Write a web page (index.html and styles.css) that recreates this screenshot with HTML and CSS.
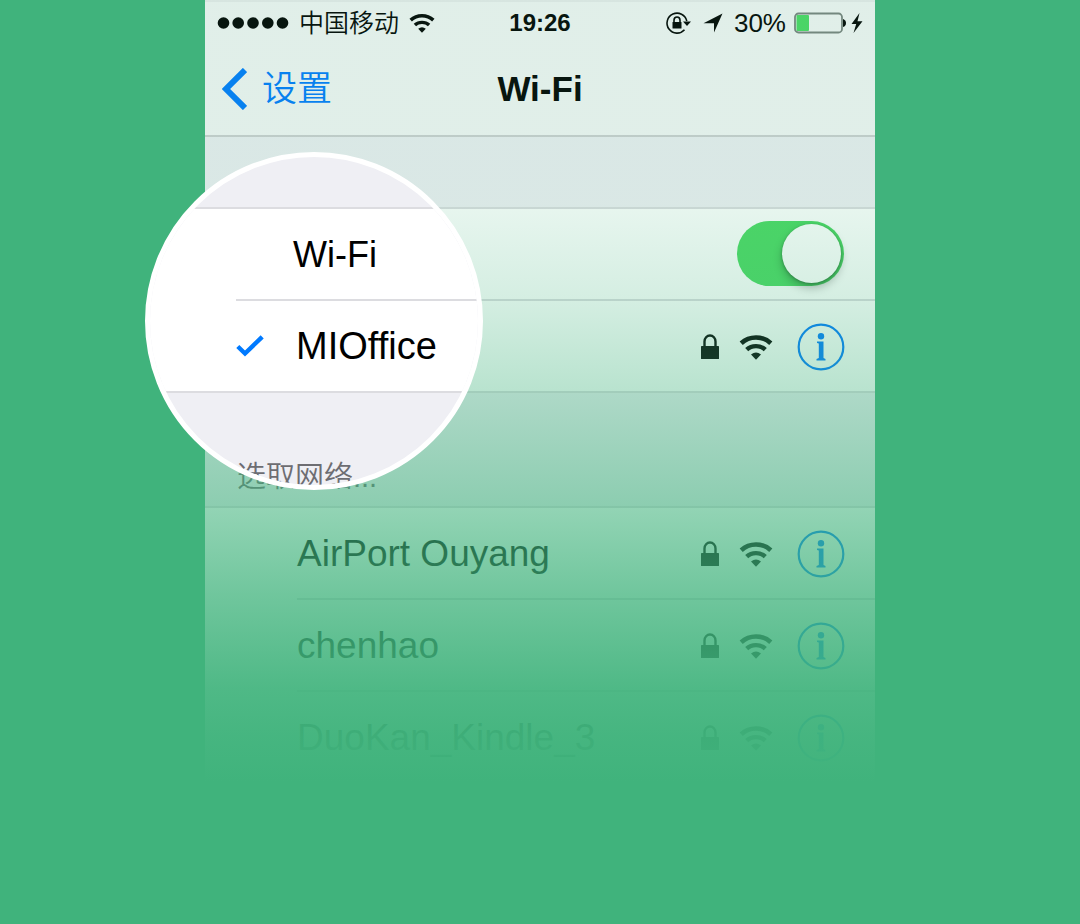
FILE: index.html
```html
<!DOCTYPE html>
<html lang="zh-CN">
<head>
<meta charset="utf-8">
<meta name="viewport" content="width=device-width, initial-scale=1">
<title>Wi-Fi</title>
<link rel="stylesheet" href="styles.css">
</head>
<body>
<svg class="sprite" aria-hidden="true">
  <symbol id="wifi" viewBox="0 0 34 26">
    <path d="M2.200 9.200C10.500 1.500 23.500 1.500 31.800 9.200" fill="none" stroke="currentColor" stroke-width="4.600"/>
    <path d="M7.700 15.700C12.700 10.900 21.300 10.900 26.300 15.700" fill="none" stroke="currentColor" stroke-width="4.400"/>
    <path d="M12 20.500Q17 16.300 22 20.500L17 25.700Z" fill="currentColor"/>
  </symbol>
  <symbol id="lock" viewBox="0 0 20 26">
    <path d="M4.500 13V7.500a5.500 6 0 0 1 11 0V13" fill="none" stroke="currentColor" stroke-width="2.400"/>
    <rect x="1" y="12" width="18" height="13" rx=".6" fill="currentColor"/>
  </symbol>
  <symbol id="info" viewBox="0 0 48 48">
    <circle cx="24" cy="24" r="22.300" fill="none" stroke="currentColor" stroke-width="2.200"/>
    <circle cx="24" cy="13.200" r="3.200" fill="currentColor"/>
    <path d="M20 18.500h6.500v16.500l2 1v1.500h-9v-1.500l2.300-1V20.500l-1.800-.6z" fill="currentColor"/>
  </symbol>
</svg>

<main class="phone">
  <header class="top">
    <div class="status">
      <div class="status-left">
        <svg class="dots" viewBox="0 0 72 12" aria-hidden="true"><circle cx="6.500" cy="6" r="5.800"/><circle cx="21.200" cy="6" r="5.800"/><circle cx="36" cy="6" r="5.800"/><circle cx="50.800" cy="6" r="5.800"/><circle cx="65.500" cy="6" r="5.800"/></svg>
        <span class="carrier">中国移动</span>
        <svg class="status-wifi" aria-hidden="true"><use href="#wifi"/></svg>
      </div>
      <time class="clock">19:26</time>
      <div class="status-right">
        <svg class="rotation" viewBox="0 0 26 24" aria-hidden="true">
          <path d="M19.500 18.800A10 10 0 1 1 21.800 10" fill="none" stroke="currentColor" stroke-width="1.600"/>
          <path d="M18 10.500h8l-4 4.500z" fill="currentColor"/>
          <path d="M9 12V9.300a3 3.300 0 0 1 6 0V12" fill="none" stroke="currentColor" stroke-width="1.600"/>
          <rect x="7.500" y="11" width="9" height="6.500" rx=".5" fill="currentColor"/>
        </svg>
        <svg class="location" viewBox="0 0 20 20" aria-hidden="true"><path d="M19.500.5L11 19.500V10.200H.5z" fill="currentColor"/></svg>
        <span class="percent">30%</span>
        <svg class="battery" viewBox="0 0 52 22" aria-hidden="true">
          <rect x="1" y="1.500" width="47" height="19" rx="3.500" fill="none" stroke="#7b827f" stroke-width="1.800"/>
          <rect x="2.500" y="3" width="12.500" height="16" rx="1" fill="#4cd964"/>
          <path d="M49 7q3 1 3 4t-3 4z" fill="currentColor"/>
        </svg>
        <svg class="bolt" viewBox="0 0 12 20" aria-hidden="true"><path d="M8.500 0L.5 11h4.700L2.500 20 11.500 8.200H6.500z" fill="currentColor"/></svg>
      </div>
    </div>
    <nav class="nav">
      <a class="back" href="#settings">
        <svg class="chevron" viewBox="0 0 25 42" aria-hidden="true"><path d="M23 2L4 21l19 19" fill="none" stroke="currentColor" stroke-width="6"/></svg>
        <span>设置</span>
      </a>
      <h1 class="title">Wi-Fi</h1>
    </nav>
  </header>

  <section class="group current">
    <div class="row"><div class="cell end">
      <input class="switch" type="checkbox" role="switch" aria-label="Wi-Fi" checked>
    </div></div>
    <div class="row"><div class="cell end">
      <span class="icons"><svg class="lock"><use href="#lock"/></svg><svg class="wifi"><use href="#wifi"/></svg><button class="info" type="button" aria-label="MIOffice"><svg><use href="#info"/></svg></button></span>
    </div></div>
  </section>

  <h2 class="label">选取网络...</h2>

  <section class="group list">
    <div class="row"><div class="cell">
      <span class="name">AirPort Ouyang</span>
      <span class="icons"><svg class="lock"><use href="#lock"/></svg><svg class="wifi"><use href="#wifi"/></svg><button class="info" type="button" aria-label="AirPort Ouyang"><svg><use href="#info"/></svg></button></span>
    </div></div>
    <div class="row"><div class="cell">
      <span class="name">chenhao</span>
      <span class="icons"><svg class="lock"><use href="#lock"/></svg><svg class="wifi"><use href="#wifi"/></svg><button class="info" type="button" aria-label="chenhao"><svg><use href="#info"/></svg></button></span>
    </div></div>
    <div class="row"><div class="cell">
      <span class="name">DuoKan_Kindle_3</span>
      <span class="icons"><svg class="lock"><use href="#lock"/></svg><svg class="wifi"><use href="#wifi"/></svg><button class="info" type="button" aria-label="DuoKan_Kindle_3"><svg><use href="#info"/></svg></button></span>
    </div></div>
  </section>

  <aside class="lens">
    <div class="lens-gap"></div>
    <div class="lens-group">
      <div class="lens-row"><span class="lens-title">Wi-Fi</span></div>
      <div class="lens-row chosen">
        <svg class="check" viewBox="0 0 28 22" aria-hidden="true"><path d="M1.800 11.500l7.200 7L26.200 1.800" fill="none" stroke="currentColor" stroke-width="4.400"/></svg>
        <span>MIOffice</span>
      </div>
    </div>
    <div class="label lens-label" aria-hidden="true">选取网络...</div>
  </aside>
</main>
</body>
</html>
```
FILE: styles.css
```css
* { box-sizing: border-box; }

body {
  margin: 0;
  min-height: 100vh;
  background: #40b37c;
  color: #000;
  font-family: "Liberation Sans", "Noto Sans CJK SC", sans-serif;
}

svg { display: block; }
.sprite { position: absolute; width: 0; height: 0; }

.phone {
  position: relative;
  width: 100%;
  max-width: 670px;
  margin: 0 auto;
  background: #efeff4;
}

/* Fades the screen into the page colour; lies over all of it but the lens. */
.phone::after {
  content: "";
  position: absolute;
  inset: 0;
  pointer-events: none;
  background: linear-gradient(
    rgb(64 179 124 / 12%) 0,
    rgb(64 179 124 / 12%) 26%,
    rgb(64 179 124 / 22%) 38%,
    rgb(64 179 124 / 37%) 50%,
    rgb(64 179 124 / 57%) 65%,
    rgb(64 179 124 / 75%) 76%,
    rgb(64 179 124 / 92%) 88%,
    rgb(64 179 124 / 97%) 94%,
    #40b37c 100%);
}

.top {
  background: #f7f7f8;
  border-top: 2px solid #ececee;
  border-bottom: 2px solid #cfcfd2;
}

.status {
  display: grid;
  grid-template-columns: 1fr auto 1fr;
  align-items: center;
  height: 41px;
  padding: 0 12px;
}
.status-left, .status-right { display: flex; align-items: center; }
.status-right { justify-content: flex-end; }
.dots { width: 72px; height: 12px; margin-right: 10px; }
.carrier { font-size: 25px; font-weight: 350; line-height: 30px; margin-right: 10px; }
.status-wifi { width: 26px; height: 20px; }
.clock { font-size: 24px; font-weight: 700; line-height: 30px; }
.rotation { width: 26px; height: 24px; margin-right: 12px; }
.location { width: 20px; height: 20px; margin-right: 11px; }
.percent { font-size: 26px; line-height: 30px; margin-right: 8px; }
.battery { width: 52px; height: 22px; margin-right: 5px; }
.bolt { width: 12px; height: 20px; }

.nav {
  display: grid;
  grid-template-columns: 1fr auto 1fr;
  align-items: center;
  height: 92px;
  padding: 0 17px;
}
.back {
  display: flex;
  align-items: center;
  gap: 15px;
  color: #007aff;
  font-size: 35px;
  font-weight: 350;
  line-height: 42px;
  text-decoration: none;
}
.chevron { width: 25px; height: 42px; }
.title { margin: 0; font-size: 35px; font-weight: 700; line-height: 42px; }

.group {
  background: #fff;
  border-top: 2px solid #dcdce0;
}
.current { margin-top: 70px; border-bottom: 2px solid #dcdce0; }
.row + .row .cell { border-top: 2px solid #dcdce0; }
.list .row { padding-left: 92px; }
.cell {
  display: flex;
  align-items: center;
  justify-content: space-between;
  height: 92px;
  padding: 2px 30px 0 0;
}
.row:first-child .cell { height: 90px; }
.end { justify-content: flex-end; }
.name { font-size: 37px; line-height: 44px; }

.icons { display: flex; align-items: center; }
.lock { width: 20px; height: 26px; margin-right: 19px; }
.wifi { width: 34px; height: 26px; margin-right: 24px; }
.info {
  padding: 0;
  border: 0;
  background: none;
  color: #007aff;
}
.info svg { width: 48px; height: 48px; }

.switch {
  appearance: none;
  display: flex;
  align-items: center;
  justify-content: flex-end;
  width: 107px;
  height: 65px;
  margin: 0 1px 3px 0;
  padding: 3px;
  border-radius: 33px;
  background: #4cd964;
}
.switch::before {
  content: "";
  width: 59px;
  height: 59px;
  border-radius: 50%;
  background: #fff;
  box-shadow: 0 5px 10px rgb(0 0 0 / 28%), 0 1px 3px rgb(0 0 0 / 30%);
}
.switch:not(:checked) { justify-content: flex-start; background: #ddd; }

.label {
  margin: 0;
  padding: 66px 32px 11px;
  color: #6d6d72;
  font-size: 29px;
  font-weight: 350;
  line-height: 36px;
}

.lens {
  position: absolute;
  z-index: 1;
  top: 152px;
  left: -60px;
  width: 338px;
  height: 338px;
  overflow: hidden;
  border: 5px solid #fff;
  border-radius: 50%;
  background: #efeff4;
}
.lens-gap { height: 50px; }
.lens-group {
  background: #fff;
  border-top: 2px solid #dcdce0;
  border-bottom: 2px solid #dcdce0;
}
.lens-row {
  display: flex;
  align-items: center;
  height: 90px;
  padding: 2px 0 0 143px;
  font-size: 38px;
  line-height: 44px;
}
.lens-title { font-size: 36px; }
.chosen {
  height: 92px;
  margin-left: 86px;
  padding: 0;
  gap: 32px;
  border-top: 2px solid #dcdce0;
}
.check { width: 28px; height: 22px; color: #007aff; }
.lens-label { padding-left: 87px; }
```
